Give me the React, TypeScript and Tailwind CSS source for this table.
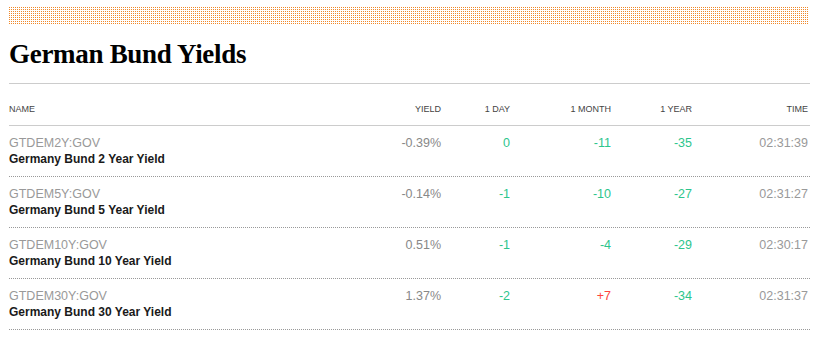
const rows = [
  { ticker: "GTDEM2Y:GOV", name: "Germany Bund 2 Year Yield", yieldPct: "-0.39%", day: "0", month: "-11", year: "-35", time: "02:31:39" },
  { ticker: "GTDEM5Y:GOV", name: "Germany Bund 5 Year Yield", yieldPct: "-0.14%", day: "-1", month: "-10", year: "-27", time: "02:31:27" },
  { ticker: "GTDEM10Y:GOV", name: "Germany Bund 10 Year Yield", yieldPct: "0.51%", day: "-1", month: "-4", year: "-29", time: "02:30:17" },
  { ticker: "GTDEM30Y:GOV", name: "Germany Bund 30 Year Yield", yieldPct: "1.37%", day: "-2", month: "+7", year: "-34", time: "02:31:37" },
];

const cols = "grid grid-cols-[352px_80px_69px_101px_81px_116px]";

function tone(v: string) {
  return v.startsWith("+") ? "text-[#ff433d]" : "text-[#2dc58c]";
}

function DotBand() {
  return (
    <svg width="799" height="19" className="block" shapeRendering="crispEdges">
      <defs>
        <pattern id="dots" width="2" height="2" patternUnits="userSpaceOnUse">
          <rect x="0" y="1" width="1" height="1" fill="#f0892a" />
        </pattern>
      </defs>
      <rect width="799" height="19" fill="url(#dots)" />
    </svg>
  );
}

export default function App() {
  return (
    <div className="min-h-screen w-[819px] bg-white px-[9px] pt-[6px] font-['Liberation_Sans',Arial,sans-serif]">
      <DotBand />

      <h1 className="mt-[17px] border-b border-[#ccc] pb-[17px] font-['Liberation_Serif',serif] text-[27px] font-bold leading-[24px] tracking-[-0.3px] text-black">
        German Bund Yields
      </h1>

      <div className={`${cols} border-b border-[#ccc] pt-[20px] pb-[11px] text-[9px] leading-[10px] uppercase text-[#444]`}>
        <div>Name</div>
        <div className="text-right">Yield</div>
        <div className="text-right">1 Day</div>
        <div className="text-right">1 Month</div>
        <div className="text-right">1 Year</div>
        <div className="text-right">Time</div>
      </div>

      {rows.map((r) => (
        <div key={r.ticker} className={`${cols} border-b border-dotted border-[#999] pt-[9px] pb-[9px] text-[12.5px] leading-[16px]`}>
          <div>
            <div className="text-[#999]">{r.ticker}</div>
            <div className="text-[12px] font-bold text-[#1a1a1a]">{r.name}</div>
          </div>
          <div className="text-right text-[#888]">{r.yieldPct}</div>
          <div className={`text-right ${tone(r.day)}`}>{r.day}</div>
          <div className={`text-right ${tone(r.month)}`}>{r.month}</div>
          <div className={`text-right ${tone(r.year)}`}>{r.year}</div>
          <div className="text-right text-[#999]">{r.time}</div>
        </div>
      ))}
    </div>
  );
}
